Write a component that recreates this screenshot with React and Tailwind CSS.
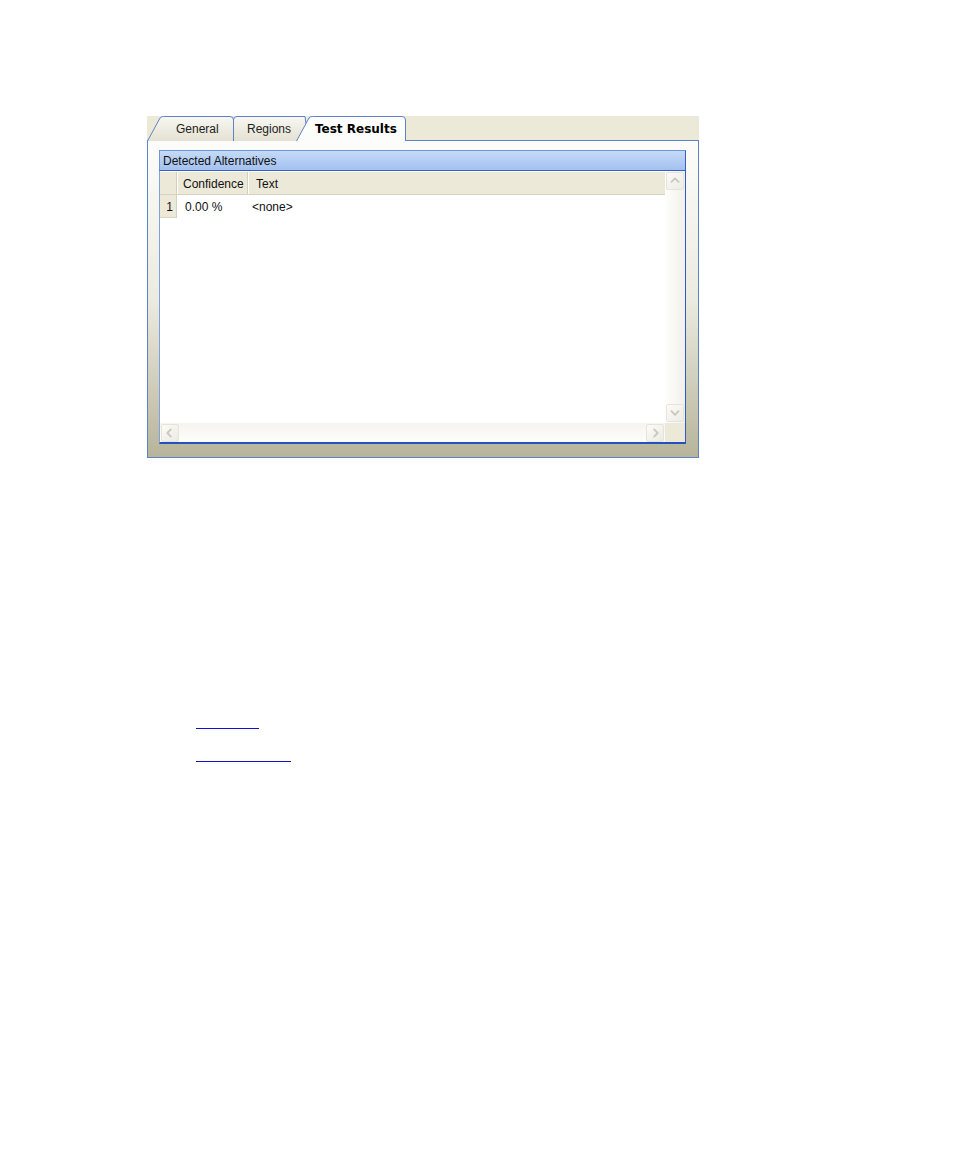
import React from 'react';

const font = { fontFamily: '"Liberation Sans", Arial, sans-serif' };

function Chevron({ dir }) {
  const pts = {
    up: '5,10 9,6 13,10',
    down: '5,7 9,11 13,7',
    left: '10,5 6,9 10,13',
    right: '8,5 12,9 8,13',
  }[dir];
  return (
    <svg width="18" height="18" viewBox="0 0 18 18">
      <polyline points={pts} fill="none" stroke="#C9C8BD" strokeWidth="2" strokeLinejoin="round" strokeLinecap="round" />
    </svg>
  );
}

function ScrollButton({ dir }) {
  return (
    <div className="w-[18px] h-[18px] flex items-center justify-center rounded-[2px] border border-[#E6E4DA] bg-gradient-to-br from-[#FBFBF8] to-[#ECEBE3]">
      <Chevron dir={dir} />
    </div>
  );
}

function TabShape({ width, selected, variant }) {
  const w = width;
  let d;
  if (variant === 'slant') {
    d = `M0.5,25 L13,2 Q14,0.5 16.5,0.5 L${w - 4},0.5 Q${w - 0.5},0.5 ${w - 0.5},4 L${w - 0.5},25`;
  } else {
    d = `M0.5,25 L0.5,4 Q0.5,0.5 4,0.5 L${w - 4},0.5 L${w - 0.5},25`;
  }
  const id = selected ? 'tabSel' : `tab${variant}${w}`;
  return (
    <svg className="absolute inset-0" width={w} height="25" viewBox={`0 0 ${w} 25`}>
      <defs>
        <linearGradient id={id} x1="0" y1="0" x2="0" y2="1">
          <stop offset="0" stopColor={selected ? '#FFFFFF' : '#F8F7F2'} />
          <stop offset="1" stopColor={selected ? '#FBFBF8' : '#E4E1D2'} />
        </linearGradient>
      </defs>
      <path d={d} fill={`url(#${id})`} stroke="#5C83C9" strokeWidth="1" />
    </svg>
  );
}

function Tab({ label, width, selected, variant, pad, className = '' }) {
  return (
    <div className={`relative h-[25px] shrink-0 ${className}`} style={{ width }}>
      <TabShape width={width} selected={selected} variant={variant} />
      <div
        className={`relative h-full flex items-center pt-px ${selected ? 'text-[12px] font-bold text-black' : 'text-[12px] text-[#222]'}`}
        style={{ paddingLeft: pad, fontFamily: selected ? '"DejaVu Sans", Verdana, sans-serif' : '"Liberation Sans", Arial, sans-serif' }}
      >
        {label}
      </div>
    </div>
  );
}

export default function App() {
  return (
    <div className="w-[954px] h-[1164px] bg-white pt-[116px] pl-[147px]" style={font}>
      <div className="w-[552px]">
        {/* Tab strip */}
        <div className="h-[24px] bg-[#ECE9D8] flex items-start relative z-10">
          <Tab label="General" width={87} variant="slant" pad={29} />
          <Tab label="Regions" width={76} variant="round" pad={14} className="-ml-px" />
          <Tab label="Test Results" width={110} variant="slant" pad={19} selected className="-ml-[13px]" />
        </div>

        {/* Panel */}
        <div className="h-[318px] border border-[#5C83C9] bg-gradient-to-b from-[#FCFCFA] via-[#ECEBE1] to-[#B7B49B] pt-[9px] pl-[11px]">
          <div className="w-[527px] h-[294px] flex flex-col">
            {/* Group header */}
            <div className="h-[21px] border border-[#6F95D8] border-r-[#3560C4] border-b-[#3560C4] bg-gradient-to-b from-[#C5DAF8] to-[#A3C1EF] flex items-center pl-[3px] text-[12px] text-[#111]">
              Detected Alternatives
            </div>
            {/* Grid area */}
            <div className="flex-1 border-l border-l-[#7FA2DE] border-r border-r-[#2D5BC2] border-b-2 border-b-[#2352C0] bg-white flex flex-col">
              <div className="flex-1 flex">
                {/* Data grid */}
                <div className="flex-1 flex flex-col text-[12px] text-[#111] pt-px">
                  <div className="h-[23px] flex bg-[#ECE9D8] border-b border-[#D7D3C3]">
                    <div className="w-[17px] border-r border-[#D3CFBE]" />
                    <div className="w-[71px] border-r border-[#D3CFBE] flex items-center pl-[6px] pt-px shadow-[inset_1px_0_0_#FFFFFF]">Confidence</div>
                    <div className="flex-1 flex items-center pl-[8px] pt-px shadow-[inset_1px_0_0_#FFFFFF]">Text</div>
                  </div>
                  <div className="h-[23px] flex">
                    <div className="w-[17px] bg-[#ECE9D8] border-r border-b border-[#D7D3C3] flex items-center justify-end pr-[3px] pt-px">1</div>
                    <div className="w-[71px] flex items-center pl-[8px] pt-px">0.00 %</div>
                    <div className="flex-1 flex items-center pl-[4px] pt-px">&lt;none&gt;</div>
                  </div>
                  <div className="flex-1" />
                </div>
                {/* Vertical scrollbar */}
                <div className="w-[20px] flex flex-col items-center justify-between py-px bg-gradient-to-r from-[#FEFEFC] to-[#F1F0EA]">
                  <ScrollButton dir="up" />
                  <ScrollButton dir="down" />
                </div>
              </div>
              {/* Horizontal scrollbar */}
              <div className="h-[19px] flex">
                <div className="flex-1 flex items-center justify-between px-px bg-gradient-to-b from-[#F5F4EF] to-[#FDFDFB]">
                  <ScrollButton dir="left" />
                  <ScrollButton dir="right" />
                </div>
                <div className="w-[20px] bg-[#ECE9D8]" />
              </div>
            </div>
          </div>
        </div>
      </div>

      {/* Link underlines */}
      <div className="pl-[49px] pt-[270px] flex flex-col">
        <div className="w-[63px] h-px bg-[#1111CC]" />
        <div className="w-[95px] h-px bg-[#1111CC] mt-[32px]" />
      </div>
    </div>
  );
}
